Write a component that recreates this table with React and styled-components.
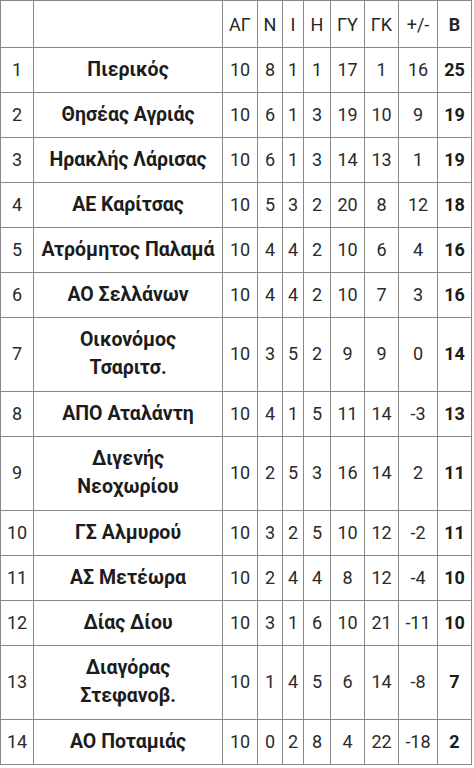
import React from "react";
import styled, { createGlobalStyle } from "styled-components";

const GlobalStyle = createGlobalStyle`
  html, body {
    margin: 0;
    padding: 0;
    background: #ffffff;
  }
  body {
    font-family: Roboto, "Noto Sans", "Liberation Sans", sans-serif;
    color: #222222;
  }
`;

const columns = [33, 189, 35, 25, 21, 27, 34, 34, 39, 34];
const headers = ["", "", "ΑΓ", "Ν", "Ι", "Η", "ΓΥ", "ΓΚ", "+/-", "Β"];

const rows = [
  [1, ["Πιερικός"], 10, 8, 1, 1, 17, 1, 16, 25],
  [2, ["Θησέας Αγριάς"], 10, 6, 1, 3, 19, 10, 9, 19],
  [3, ["Ηρακλής Λάρισας"], 10, 6, 1, 3, 14, 13, 1, 19],
  [4, ["ΑΕ Καρίτσας"], 10, 5, 3, 2, 20, 8, 12, 18],
  [5, ["Ατρόμητος Παλαμά"], 10, 4, 4, 2, 10, 6, 4, 16],
  [6, ["ΑΟ Σελλάνων"], 10, 4, 4, 2, 10, 7, 3, 16],
  [7, ["Οικονόμος", "Τσαριτσ."], 10, 3, 5, 2, 9, 9, 0, 14],
  [8, ["ΑΠΟ Αταλάντη"], 10, 4, 1, 5, 11, 14, -3, 13],
  [9, ["Διγενής", "Νεοχωρίου"], 10, 2, 5, 3, 16, 14, 2, 11],
  [10, ["ΓΣ Αλμυρού"], 10, 3, 2, 5, 10, 12, -2, 11],
  [11, ["ΑΣ Μετέωρα"], 10, 2, 4, 4, 8, 12, -4, 10],
  [12, ["Δίας Δίου"], 10, 3, 1, 6, 10, 21, -11, 10],
  [13, ["Διαγόρας", "Στεφανοβ."], 10, 1, 4, 5, 6, 14, -8, 7],
  [14, ["ΑΟ Ποταμιάς"], 10, 0, 2, 8, 4, 22, -18, 2],
];

const Table = styled.table`
  width: 471px;
  table-layout: fixed;
  border-collapse: collapse;
  font-size: 18px;
`;

const HeadCell = styled.th`
  height: 46px;
  padding: 0 1px;
  border: 1px solid #878787;
  font-weight: ${(p) => (p.$bold ? 700 : 400)};
  text-align: center;
  color: #262626;
  white-space: nowrap;
`;

const Cell = styled.td`
  padding: ${(p) => (p.$tall ? "8px 1px 9px" : "8px 1px")};
  border: 1px solid #878787;
  text-align: center;
  line-height: 28px;
  white-space: nowrap;
  color: #2a2a2a;
`;

const NameCell = styled(Cell)`
  font-size: 19.5px;
  font-weight: 700;
  color: #1c1c1c;
`;

const PointsCell = styled(Cell)`
  font-weight: 700;
  color: #1c1c1c;
`;

export default function App() {
  return (
    <>
      <GlobalStyle />
      <Table>
        <colgroup>
          {columns.map((w, i) => (
            <col key={i} style={{ width: w }} />
          ))}
        </colgroup>
        <thead>
          <tr>
            {headers.map((h, i) => (
              <HeadCell key={i} $bold={i === headers.length - 1}>
                {h}
              </HeadCell>
            ))}
          </tr>
        </thead>
        <tbody>
          {rows.map(([pos, name, ...stats]) => {
            const tall = name.length > 1;
            const points = stats[stats.length - 1];
            return (
              <tr key={pos}>
                <Cell $tall={tall}>{pos}</Cell>
                <NameCell $tall={tall}>
                  {name.map((line, i) => (
                    <React.Fragment key={i}>
                      {i > 0 && <br />}
                      {line}
                    </React.Fragment>
                  ))}
                </NameCell>
                {stats.slice(0, -1).map((v, i) => (
                  <Cell key={i} $tall={tall}>
                    {v}
                  </Cell>
                ))}
                <PointsCell $tall={tall}>{points}</PointsCell>
              </tr>
            );
          })}
        </tbody>
      </Table>
    </>
  );
}
